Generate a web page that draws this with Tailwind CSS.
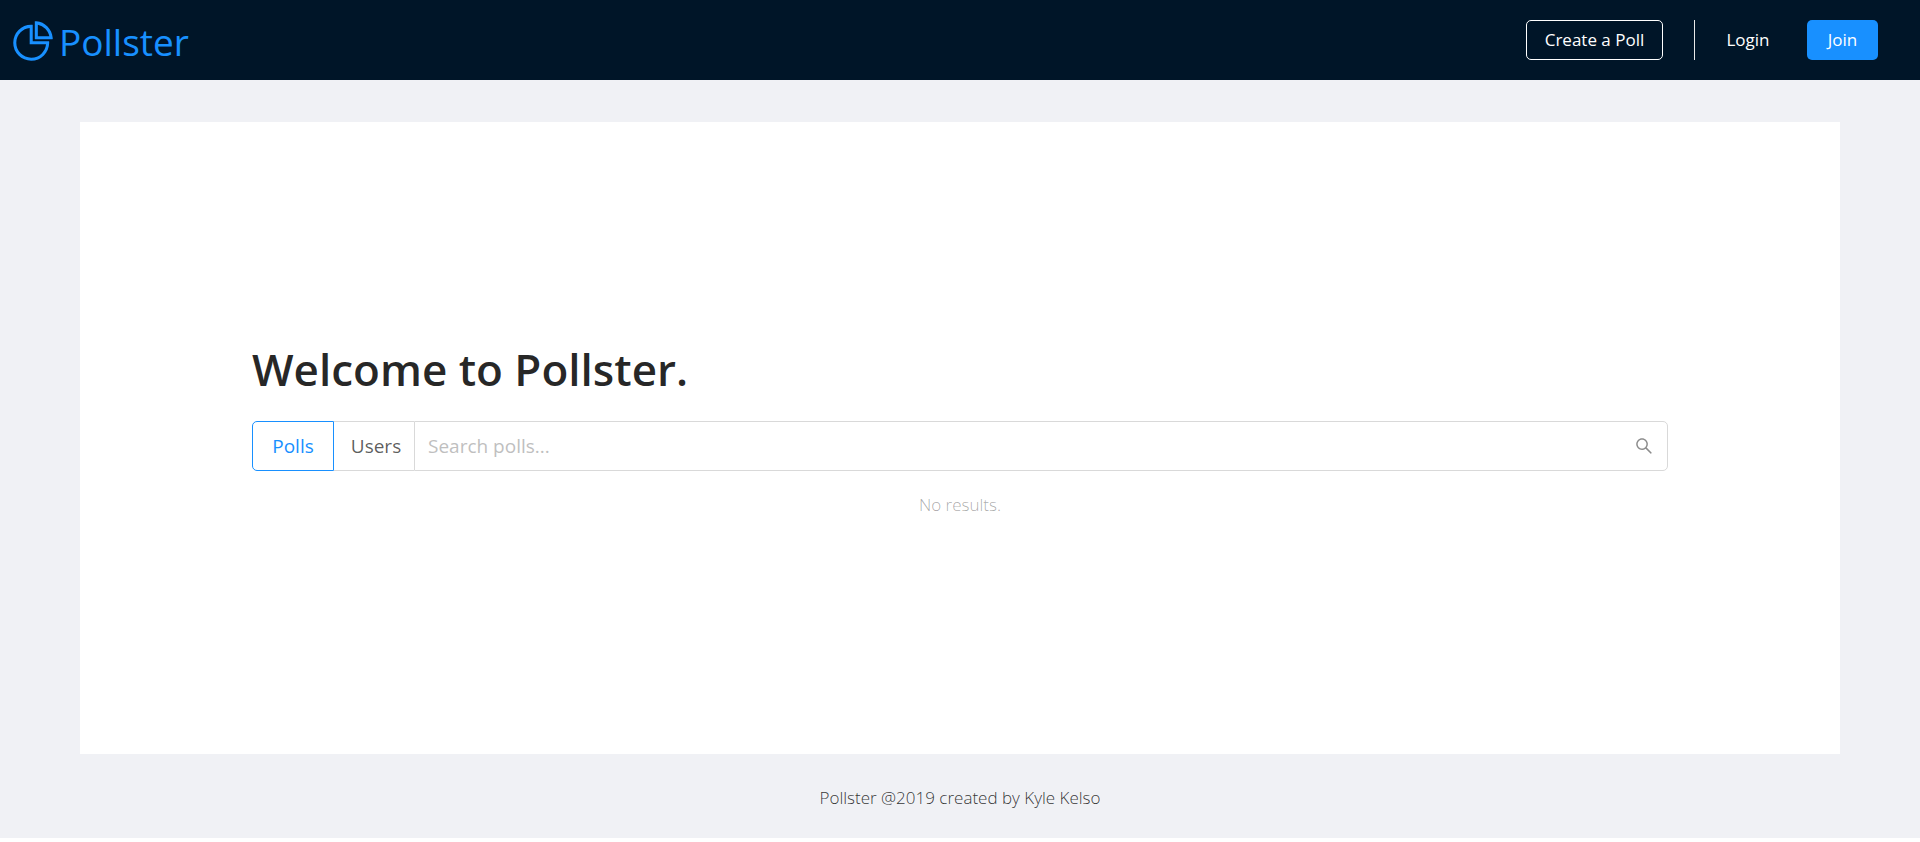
<!DOCTYPE html>
<html lang="en">
<head>
<meta charset="utf-8">
<meta name="viewport" content="width=device-width, initial-scale=1">
<title>Pollster</title>
<script src="https://cdn.jsdelivr.net/npm/@tailwindcss/browser@4"></script>
</head>
<body class="bg-white font-['Open_Sans','Noto_Sans',sans-serif] text-black/65">
<div class="flex flex-col bg-[#f0f1f5]">
  <header class="flex h-20 items-center justify-between bg-[#001528] pr-[42px] pl-[10px]">
    <a href="#" class="flex items-center gap-[3px] pt-[2px] text-[37px] leading-none text-[#1890ff]">
      <svg class="size-[46px]" viewBox="0 0 1024 1024" fill="currentColor" aria-hidden="true"><path d="M864 518H506V160c0-4.4-3.6-8-8-8h-26a398.46 398.46 0 0 0-282.8 117.1 398.19 398.19 0 0 0-85.7 127.1A397.61 397.61 0 0 0 72 552a398.46 398.46 0 0 0 117.1 282.8c36.7 36.7 79.5 65.6 127.1 85.7A397.61 397.61 0 0 0 472 952a398.46 398.46 0 0 0 282.8-117.1c36.7-36.7 65.6-79.5 85.7-127.1A397.61 397.61 0 0 0 872 552v-26c0-4.4-3.6-8-8-8zM705.7 787.8A331.59 331.59 0 0 1 470.4 884c-88.1-.4-170.9-34.9-233.2-97.2C174.5 724.1 140 640.7 140 552c0-88.7 34.5-172.1 97.2-234.8 54.6-54.6 124.9-87.9 200.8-95.5V586h364.3c-7.7 76.3-41.3 147-96.6 201.8zM952 462.4l-2.6-28.2c-8.5-92.1-49.4-179-115.2-244.6A399.4 399.4 0 0 0 589 74.6L560.7 72c-4.7-.4-8.7 3.2-8.7 7.9V464c0 4.4 3.6 8 8 8l384-1c4.7 0 8.4-4 8-8.6zm-332.2-58.2V147.6a332.24 332.24 0 0 1 166.4 89.8c45.7 45.6 77 103.6 90 166.1l-256.4.7z"/></svg>
      <span>Pollster</span>
    </a>
    <nav class="flex items-center text-[17px] text-white">
      <button type="button" class="h-10 w-[137px] rounded-[5px] border border-white">Create a Poll</button>
      <span class="ml-[31px] h-10 w-px bg-[#e8e8e8]"></span>
      <button type="button" class="mr-[6px] h-10 w-[106px]">Login</button>
      <button type="button" class="h-10 w-[71px] rounded-[5px] bg-[#1890ff]">Join</button>
    </nav>
  </header>
  <main class="mx-20 mt-[42px] flex h-[632px] flex-col bg-white px-[172px] pt-[214px]">
    <h1 class="text-[44px] leading-[66px] font-semibold text-black/85">Welcome to Pollster.</h1>
    <form class="mt-[19px] flex h-[50px] text-[19px]">
      <button type="button" class="w-[82px] rounded-l-[5px] border border-[#1890ff] text-[#1890ff]">Polls</button>
      <button type="button" class="w-20 border-y border-[#d9d9d9] pl-1">Users</button>
      <label class="flex min-w-0 flex-1 items-center rounded-r-[5px] border border-[#d9d9d9] pr-[13px] pl-[13px]">
        <input type="text" aria-label="Search polls" placeholder="Search polls..." class="min-w-0 flex-1 outline-none placeholder:text-[#bfbfbf]">
        <svg class="size-5 text-black/45" viewBox="0 0 1024 1024" fill="currentColor" aria-hidden="true"><path d="M909.6 854.5L649.9 594.8C690.2 542.7 712 479 712 412c0-80.2-31.3-155.4-87.9-212.1-56.6-56.7-132-87.9-212.1-87.9s-155.5 31.3-212.1 87.9C143.2 256.5 112 331.8 112 412c0 80.1 31.3 155.5 87.9 212.1C256.5 680.8 331.8 712 412 712c67 0 130.6-21.8 182.7-62l259.7 259.6a8.2 8.2 0 0 0 11.6 0l43.6-43.5a8.2 8.2 0 0 0 0-11.6zM570.4 570.4C528 612.7 471.8 636 412 636s-116-23.3-158.4-65.6C211.3 528 188 471.8 188 412s23.3-116.1 65.6-158.4C296 211.3 352.2 188 412 188s116.1 23.2 158.4 65.6S636 352.2 636 412s-23.3 116.1-65.6 158.4z"/></svg>
      </label>
    </form>
    <p class="mt-5 text-center text-[17px] leading-7 font-light text-black/35">No results.</p>
  </main>
  <footer class="flex h-[84px] items-center justify-center pt-[3px] text-[17px] font-light text-black/80">Pollster @2019 created by Kyle Kelso</footer>
</div>
</body>
</html>
